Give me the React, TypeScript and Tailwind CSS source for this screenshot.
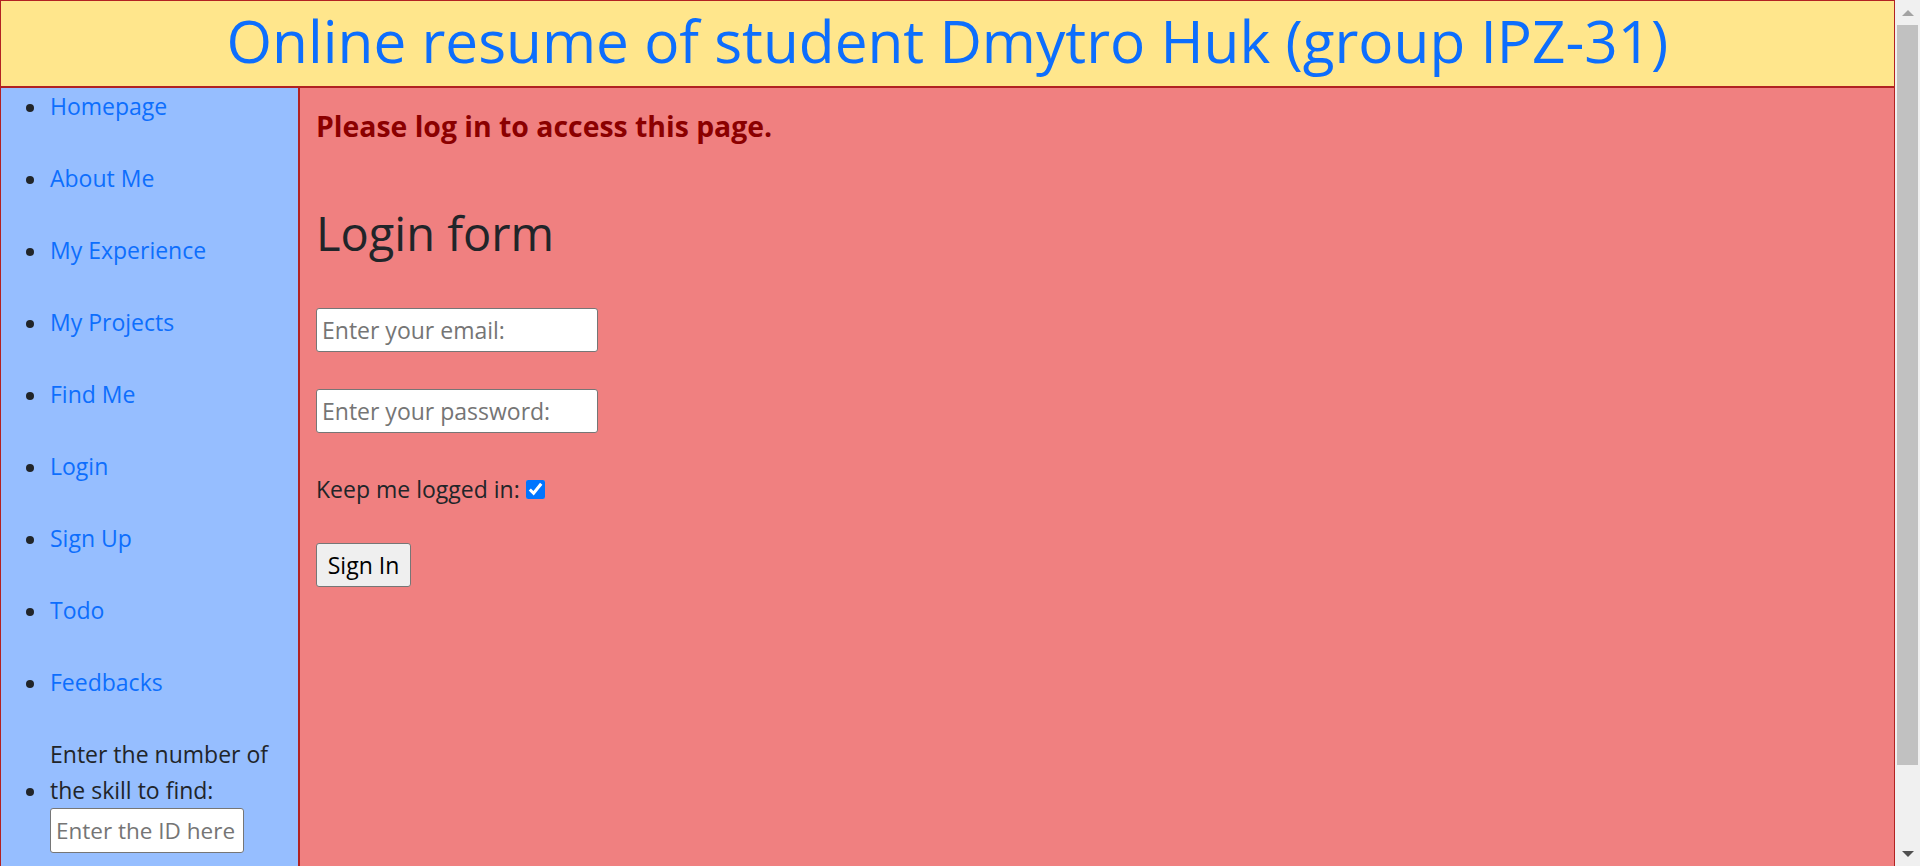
const navLinks = [
  "Homepage",
  "About Me",
  "My Experience",
  "My Projects",
  "Find Me",
  "Login",
  "Sign Up",
  "Todo",
  "Feedbacks",
];

function App() {
  return (
    <div className="flex h-screen overflow-hidden font-['Open_Sans',sans-serif] text-[#212529]">
      <div className="min-w-0 flex-1">
        {/* Header */}
        <header className="h-[88px] border border-b-2 border-[#b22222] bg-[#ffe68c]">
          <h1 className="mt-[3px] text-center text-[58.5px] leading-[72px] text-[#0d6efd]">
            Online resume of student Dmytro Huk (group IPZ-31)
          </h1>
        </header>

        <div className="flex min-h-[867px]">
          {/* Sidebar */}
          <nav className="w-[300px] shrink-0 border-l border-r-2 border-[#b22222] bg-[#96beff]">
            <ul className="pl-[25px] text-[23px]">
              {navLinks.map((link) => (
                <li key={link} className="mb-[35px] flex leading-[37px]">
                  <span className="mr-[16px] mt-[16px] h-[8px] w-[8px] shrink-0 rounded-full bg-[#212529]" />
                  <a href="#" className="text-[#0d6efd]">
                    {link}
                  </a>
                </li>
              ))}
              <li className="flex leading-[36px]">
                <span className="mr-[16px] mt-[52px] h-[8px] w-[8px] shrink-0 rounded-full bg-[#212529]" />
                <div>
                  <label>
                    Enter the number of
                    <br />
                    the skill to find:
                  </label>
                  <input
                    type="text"
                    placeholder="Enter the ID here"
                    className="block h-[45px] w-[194px] rounded-[3px] border border-[#767676] bg-white px-[5px] text-[22.5px] placeholder:text-[#757575]"
                  />
                </div>
              </li>
            </ul>
          </nav>

          {/* Main */}
          <main className="flex-1 border-r border-[#b22222] bg-[#f08080] pl-[16px]">
            <p className="mt-[20px] text-[28.4px] font-bold leading-[36px] text-[#8b0000]">
              Please log in to access this page.
            </p>

            <h2 className="mt-[59px] text-[47px] leading-[60px]">Login form</h2>

            <form className="flex flex-col items-start">
              <input
                type="email"
                placeholder="Enter your email:"
                className="mt-[45px] h-[44px] w-[282px] rounded-[3px] border border-[#767676] bg-white px-[5px] text-[23px] placeholder:text-[#757575]"
              />
              <input
                type="password"
                placeholder="Enter your password:"
                className="mt-[37px] h-[44px] w-[282px] rounded-[3px] border border-[#767676] bg-white px-[5px] text-[23px] placeholder:text-[#757575]"
              />
              <label className="mt-[38px] flex items-center text-[23px] leading-[37px]">
                Keep me logged in:
                <input type="checkbox" defaultChecked className="ml-[6px] h-[19px] w-[19px] accent-[#0075ff]" />
              </label>
              <button
                type="button"
                className="mt-[35px] h-[44px] w-[95px] rounded-[3px] border border-[#767676] bg-[#efefef] text-[23px] text-black"
              >
                Sign In
              </button>
            </form>
          </main>
        </div>
      </div>

      {/* Page scrollbar */}
      <div className="flex w-[25px] shrink-0 flex-col bg-[#f0f0f0]">
        <div className="flex h-[25px] items-center justify-center">
          <span className="h-0 w-0 border-x-[6px] border-b-[6px] border-x-transparent border-b-[#a3a3a3]" />
        </div>
        <div className="mx-[2px] h-[740px] bg-[#c1c1c1]" />
        <div className="flex-1" />
        <div className="flex h-[25px] items-center justify-center">
          <span className="h-0 w-0 border-x-[6px] border-t-[6px] border-x-transparent border-t-[#505050]" />
        </div>
      </div>
    </div>
  );
}

export default App;
